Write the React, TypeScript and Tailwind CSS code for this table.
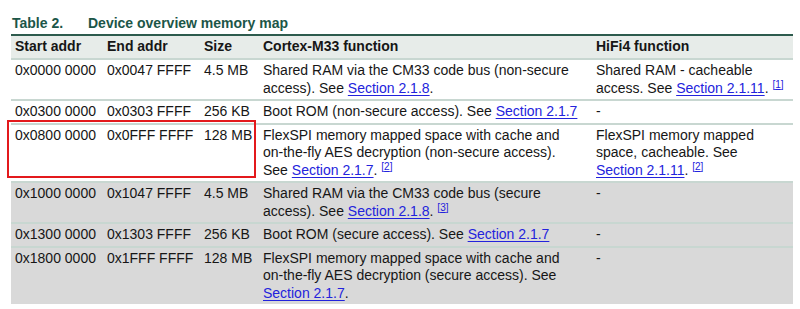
import React from "react";

const Link = ({ children }: { children: React.ReactNode }) => (
    <span className="text-[#2323dc] underline underline-offset-[2px] decoration-[1px]">{children}</span>
)

const Note = ({ n }: { n: number }) => (
    <sup className="text-[10px] text-[#2323dc] underline">[{n}]</sup>
)

interface RowModel {
    start: string,
    end: string,
    size: string,
    cm33: React.ReactNode,
    hifi: React.ReactNode,
    gray?: boolean,
    marked?: boolean
}

const rows: RowModel[] = [
    {
        start: "0x0000 0000", end: "0x0047 FFFF", size: "4.5 MB",
        cm33: <>Shared RAM via the CM33 code bus (non-secure<br />access). See <Link>Section 2.1.8</Link>.</>,
        hifi: <>Shared RAM - cacheable<br />access. See <Link>Section 2.1.11</Link>. <Note n={1} /></>
    },
    {
        start: "0x0300 0000", end: "0x0303 FFFF", size: "256 KB",
        cm33: <>Boot ROM (non-secure access). See <Link>Section 2.1.7</Link></>,
        hifi: "-"
    },
    {
        start: "0x0800 0000", end: "0x0FFF FFFF", size: "128 MB", marked: true,
        cm33: <>FlexSPI memory mapped space with cache and<br />on-the-fly AES decryption (non-secure access).<br />See <Link>Section 2.1.7</Link>. <Note n={2} /></>,
        hifi: <>FlexSPI memory mapped<br />space, cacheable. See<br /><Link>Section 2.1.11</Link>. <Note n={2} /></>
    },
    {
        start: "0x1000 0000", end: "0x1047 FFFF", size: "4.5 MB", gray: true,
        cm33: <>Shared RAM via the CM33 code bus (secure<br />access). See <Link>Section 2.1.8</Link>. <Note n={3} /></>,
        hifi: "-"
    },
    {
        start: "0x1300 0000", end: "0x1303 FFFF", size: "256 KB", gray: true,
        cm33: <>Boot ROM (secure access). See <Link>Section 2.1.7</Link></>,
        hifi: "-"
    },
    {
        start: "0x1800 0000", end: "0x1FFF FFFF", size: "128 MB", gray: true,
        cm33: <>FlexSPI memory mapped space with cache and<br />on-the-fly AES decryption (secure access). See<br /><Link>Section 2.1.7</Link>.</>,
        hifi: "-"
    }
]

const cols = "grid grid-cols-[92px_97px_59px_333px_200px]"

export default function App() {
    return (
        <div className="w-[800px] h-[309px] bg-white overflow-hidden font-['Liberation_Sans',Arial,sans-serif] text-[14px] text-[#161616]">
            <div className="pl-[12px] pt-[15px] h-[34px] flex font-bold text-[#1c5648] leading-[17px]">
                <span className="w-[76px]">Table 2.</span>
                <span>Device overview memory map</span>
            </div>
            <div className="ml-[11px] w-[782px] border-t-2 border-[#2d5b4d]">
                <div className={`${cols} bg-[#e7ece9] h-[22px] pt-[2px] font-bold leading-[17.5px]`}>
                    <div className="pl-[4px]">Start addr</div>
                    <div className="pl-[4px]">End addr</div>
                    <div className="pl-[4px]">Size</div>
                    <div className="pl-[4px]">Cortex-M33 function</div>
                    <div className="pl-[4px]">HiFi4 function</div>
                </div>
                {rows.map(({ start, end, size, cm33, hifi, gray, marked }) => (
                    <div key={start} className={`${cols} relative border-t-2 border-[#c8d7d1] pt-[2px] pb-[2px] leading-[17.5px] whitespace-nowrap ${gray ? "bg-[#d9d9d9]" : "bg-white"}`}>
                        <div className="pl-[4px]">{start}</div>
                        <div className="pl-[4px]">{end}</div>
                        <div className="pl-[4px]">{size}</div>
                        <div className="pl-[4px]">{cm33}</div>
                        <div className="pl-[4px]">{hifi}</div>
                        {marked && (
                            <div className="absolute left-[-4px] top-[-5px] w-[249px] h-[58px] border-2 border-[#e3191c]" />
                        )}
                    </div>
                ))}
            </div>
        </div>
    )
}
